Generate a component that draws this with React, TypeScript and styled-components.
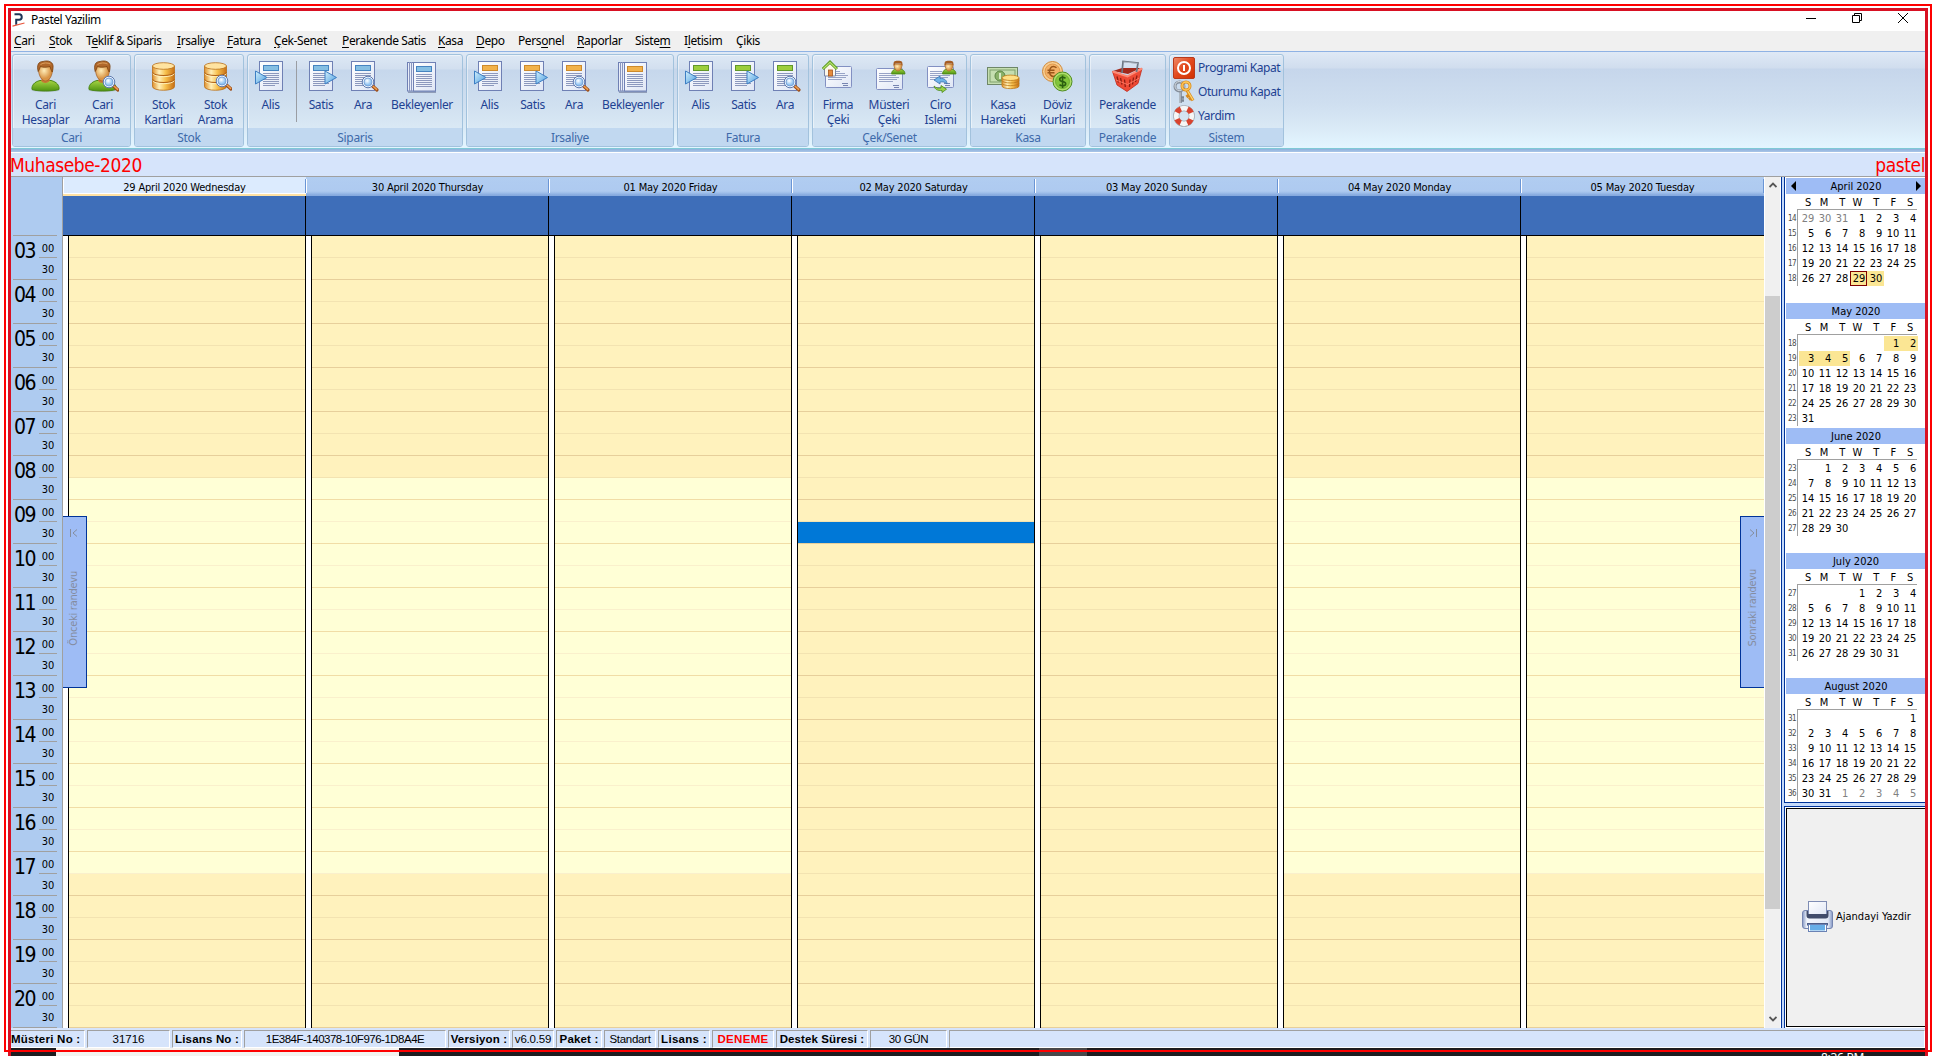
import React from "react";
import styled, { createGlobalStyle, css } from "styled-components";

const tahoma = `"DejaVu Sans Condensed", "DejaVu Sans", sans-serif`;
const segoe = `"Noto Sans", "Open Sans", sans-serif`;

const Global = createGlobalStyle`
  *, *::before, *::after { box-sizing: border-box; }
  body { margin: 0; background: #fff; overflow: hidden; }
`;

/* ---------- frame ---------- */
const Screen = styled.div`
  position: relative;
  width: 1936px;
  height: 1056px;
  padding: 8px 8px 0;
  background: #fff;
  overflow: hidden;
  font-family: ${tahoma};
  font-size: 11px;
  color: #000;
  white-space: nowrap;
`;
const OuterFrame = styled.div`
  position: absolute;
  inset: 4px 4px 4px 4px;
  border: 2px solid #fe0000;
  z-index: 10;
  pointer-events: none;
`;
const Window = styled.div`
  width: 1920px;
  height: 1048px;
  border: 3px solid #d81123;
  border-bottom: 0;
  display: flex;
  flex-direction: column;
`;

/* ---------- title & menu ---------- */
const TitleBar = styled.div`
  height: 20px;
  flex: none;
  display: flex;
  align-items: center;
  padding: 0 17px 3px 1px;
  font: 12px/17px ${segoe};
`;
const TitleText = styled.span`
  margin-left: 5px;
  flex: 1;
  letter-spacing: -0.45px;
`;
const WinButtons = styled.div`
  display: flex;
  gap: 36px;
  padding-bottom: 3px;
  line-height: 0;
`;
const MenuBar = styled.div`
  height: 21px;
  flex: none;
  display: flex;
  gap: 14px;
  padding-left: 3px;
  background: #f0f0f0;
  border-bottom: 1px solid #8fb2e4;
  font: 12px/20px ${segoe};
`;
const MenuItem = styled.span<{ $w: number }>`
  width: ${(p) => p.$w}px;
  letter-spacing: -0.4px;
  u { text-underline-offset: 2px; }
`;

/* ---------- ribbon ---------- */
const Ribbon = styled.div`
  height: 101px;
  flex: none;
  display: flex;
  align-items: flex-start;
  gap: 3px;
  padding: 2px 1px 0;
  background: linear-gradient(#dfe9f6 0, #d0ddee 16px, #c6d6eb 17px, #cfdff0 52px, #d8e8f5 72px, #e3f5ff 95px, #e3f5ff 96px, #7fc9d6 96px, #7fc9d6 97px, #8fb2dc 97px, #a9c5e8 100px, #fff 100px);
`;
const Group = styled.div<{ $w: number }>`
  width: ${(p) => p.$w}px;
  height: 93px;
  display: flex;
  flex-direction: column;
  border: 1px solid #a2c2dd;
  border-radius: 3px;
  background: linear-gradient(#dde8f5 0, #d2dfef 14px, #c6d7ec 15px, #d0e0f0 50px, #dae9f5 74px);
  overflow: hidden;
  box-shadow: inset 1px 1px 0 rgba(255, 255, 255, 0.45);
`;
const GroupBody = styled.div<{ $column?: boolean }>`
  flex: 1;
  display: flex;
  ${(p) => p.$column && css`flex-direction: column; padding: 1px 0 0 3px;`}
`;
const GroupCaption = styled.div`
  height: 18px;
  flex: none;
  background: #c1d8f0;
  color: #3e6aaa;
  text-align: center;
  font: 12px/19px ${segoe};
  letter-spacing: -0.3px;
`;
const BigButton = styled.div<{ $w: number }>`
  width: ${(p) => p.$w}px;
  flex: none;
  display: flex;
  flex-direction: column;
  align-items: center;
  padding-top: 5px;
  color: #1e4292;
  font: 12px/15px ${segoe};
  letter-spacing: -0.35px;
  text-align: center;
  white-space: pre;
  svg { margin-bottom: 4px; }
`;
const Separator = styled.div`
  width: 1px;
  height: 61px;
  margin: 6px 3px 0;
  background: #9a9da3;
`;
const SmallButton = styled.div`
  height: 24px;
  display: flex;
  align-items: center;
  gap: 3px;
  color: #1e4292;
  font: 12px/22px ${segoe};
  letter-spacing: -0.42px;
`;

/* ---------- user band ---------- */
const Band = styled.div`
  height: 24px;
  flex: none;
  display: flex;
  justify-content: space-between;
  background: #d6e4fb;
  border-bottom: 1px solid #a0a0a0;
  color: #fe0000;
  font: 19px/24px ${tahoma};
`;
const BandText = styled.span<{ $shift?: number }>`
  letter-spacing: -0.42px;
  margin-left: ${(p) => p.$shift ?? 0}px;
`;

/* ---------- main area ---------- */
const Main = styled.div`
  height: 851px;
  flex: none;
  display: flex;
`;
const TimeColumn = styled.div`
  width: 52px;
  background: #aecbf0;
  border-right: 1px solid #a0a0a0;
  padding-top: 58px;
`;
const Hour = styled.div`
  height: 44px;
  margin: 0 5px 0 2px;
  display: flex;
  border-bottom: 1px solid #a0a0a0;
  &:first-child { border-top: 1px solid #a0a0a0; height: 45px; }
`;
const HourLabel = styled.div`
  width: 26px;
  padding: 2px 0 0 1px;
  font: 21px/27px ${tahoma};
  letter-spacing: -1.4px;
`;
const Minutes = styled.div`
  width: 18px;
  font: 11px/25px ${tahoma};
  text-align: right;
  padding-right: 3px;
  letter-spacing: -0.2px;
  &:first-child { border-bottom: 1px solid #a0a0a0; }
`;
const MinuteStack = styled.div`
  width: 18px;
  ${Minutes} { height: 22px; }
  ${Minutes}:last-child { line-height: 24px; }
`;
const Schedule = styled.div`
  position: relative;
  width: 1702px;
  display: flex;
`;
const DayColumn = styled.div`
  width: 243px;
  flex: none;
`;
const DayHeader = styled.div<{ $active?: boolean }>`
  height: 19px;
  text-align: center;
  line-height: 21px;
  letter-spacing: -0.2px;
  background: linear-gradient(90deg, #fff 1px, transparent 1px) 0 2px / 1px 14px no-repeat,
    linear-gradient(90deg, #6a95d5 1px, transparent 1px) 242px 2px / 1px 14px no-repeat,
    ${(p) => p.$active
      ? "linear-gradient(#dcebfe 16px, #fff 16px, #fff 17px, #ffe2a4 17px)"
      : "linear-gradient(#b1cdf1 0, #aecaf0 14px, #9dbde9 16px, #86aadf 18px)"};
`;
const AllDay = styled.div<{ $last?: boolean }>`
  height: 40px;
  background: #3e6eb9;
  border-right: ${(p) => (p.$last ? "0" : "1px solid #000")};
  border-bottom: 1px solid #000;
`;
const Slots = styled.div<{ $last?: boolean }>`
  border-left: 5px solid #fff;
  border-right: ${(p) => (p.$last ? "0" : "1px solid #000")};
  box-shadow: inset 1px 0 0 #000;
  padding-left: 1px;
`;
const Slot = styled.div<{ $work: boolean; $hourEnd: boolean; $selected?: boolean }>`
  height: 22px;
  background: ${(p) => (p.$selected ? "#0078d7" : p.$work ? "#ffffd6" : "#fff2bd")};
  border-bottom: 1px solid
    ${(p) => (p.$work ? (p.$hourEnd ? "#f1dda6" : "#faf0cc") : p.$hourEnd ? "#e7cf9b" : "#f3e3b1")};
`;
const SideTab = styled.div<{ $right?: boolean }>`
  position: absolute;
  top: 339px;
  left: ${(p) => (p.$right ? "1677px" : "0")};
  width: 24px;
  height: 172px;
  border: 1px solid #003399;
  ${(p) => (p.$right ? "border-right: 0;" : "border-left: 0;")}
  background: #9ebcf5;
  display: flex;
  flex-direction: column;
  align-items: center;
  padding-top: 12px;
  padding-right: ${(p) => (p.$right ? 0 : 1)}px;
  color: #858da0;
`;
const SideText = styled.div<{ $top: number }>`
  margin-top: ${(p) => p.$top}px;
  writing-mode: vertical-rl;
  transform: rotate(180deg);
  font: 11px/16px ${tahoma};
  letter-spacing: -0.25px;
`;
const ScrollBar = styled.div`
  width: 16px;
  display: flex;
  flex-direction: column;
  align-items: center;
  background: #f0f0f0;
  border-right: 1px solid #fff;
`;
const ScrollArrow = styled.div`
  height: 17px;
  padding-top: 5px;
  line-height: 0;
`;
const ScrollTrack = styled.div`
  flex: 1;
  width: 100%;
  padding-top: 102px;
`;
const ScrollThumb = styled.div`
  height: 613px;
  background: #cdcdcd;
`;

/* ---------- right panel ---------- */
const Splitter = styled.div`
  width: 3px;
  background: #c5dafa;
  border-left: 1px solid #003399;
`;
const SidePanel = styled.div`
  width: 141px;
  display: flex;
  flex-direction: column;
  background: #c5dafa;
  gap: 3px;
`;
const MonthsBox = styled.div`
  height: 626px;
  border-left: 1px solid #003399;
  border-bottom: 1px solid #003399;
  background: #fff;
  padding: 1px 0 0 1px;
`;
const MonthBlock = styled.div`
  height: 125px;
`;
const MonthTitle = styled.div`
  height: 16px;
  display: flex;
  justify-content: space-between;
  align-items: center;
  padding: 0 4px 0 5px;
  background: #9ebcf5;
  line-height: 17px;
`;
const MonthName = styled.span`
  padding-top: 1px;
`;
const Arrow = styled.i<{ $dir: "left" | "right"; $hidden?: boolean }>`
  width: 0;
  border: 5px solid transparent;
  border-${(p) => (p.$dir === "left" ? "left" : "right")}-width: 0;
  border-${(p) => (p.$dir === "left" ? "right" : "left")}-color: #000;
  visibility: ${(p) => (p.$hidden ? "hidden" : "visible")};
`;
const WeekRow = styled.div`
  display: grid;
  grid-template-columns: 11px 1px repeat(7, 17px);
  height: 15px;
`;
const HeadLine = styled.div`
  height: 2px;
  margin: 0 8px 0 11px;
  border-top: 1px solid #a0a0a0;
  border-left: 1px solid #a0a0a0;
`;
const WeekNo = styled.span`
  font: 8px/15px ${tahoma};
  letter-spacing: -0.6px;
  color: #4a4a4a;
  text-align: right;
  padding-right: 1px;
`;
const VLine = styled.span`
  background: #a0a0a0;
`;
const Day = styled.span<{ $muted?: boolean; $busy?: boolean; $today?: boolean }>`
  height: 15px;
  text-align: right;
  padding-right: 2px;
  line-height: 16px;
  margin: 0 -1px 0 1px;
  letter-spacing: -0.2px;
  color: ${(p) => (p.$muted ? "#808080" : "#000")};
  ${(p) => p.$busy && css`background: #fbe694;`}
  ${(p) => p.$today && css`box-shadow: inset 0 0 0 1px #800000;`}
`;
const WeekDay = styled(Day)`
  padding-right: 5px;
  line-height: 18px;
`;
const PrintBox = styled.div`
  flex: 1;
  border-left: 1px solid #003399;
  border-top: 1px solid #003399;
  background: #fff;
  padding: 1px 0 1px 1px;
`;
const PrintButton = styled.div`
  height: 100%;
  border: 1px solid #000;
  border-right: 0;
  background: #f0f0f0;
  display: flex;
  align-items: center;
  padding: 0 0 2px 15px;
  gap: 3px;
`;

/* ---------- status bar ---------- */
const StatusBar = styled.div`
  height: 20px;
  flex: none;
  display: flex;
  gap: 2px;
  padding-top: 2px;
  background: #d6e4fb;
`;
const StatusCell = styled.div<{ $w?: number; $bold?: boolean; $red?: boolean; $ls?: number; $left?: boolean }>`
  ${(p) => (p.$w ? `width: ${p.$w}px;` : "flex: 1;")}
  border: 1px solid #fff;
  border-top-color: #a0a0a0;
  border-left: ${(p) => (p.$left ? "0" : "1px solid #a0a0a0")};
  text-align: ${(p) => (p.$left ? "left" : "center")};
  font: ${(p) => (p.$bold ? "bold 11.5px" : "11.5px")}/16px "Liberation Sans", Arial, sans-serif;
  letter-spacing: ${(p) => p.$ls ?? (p.$bold ? 0.17 : 0)}px;
  color: ${(p) => (p.$red ? "#fe0000" : "#000")};
  overflow: hidden;
`;
const TaskBar = styled.div`
  height: 8px;
  flex: none;
  display: flex;
  background: #1d1d20;
  overflow: hidden;
`;
const TaskSearch = styled.div`
  width: 343px;
  margin-left: 45px;
  background: #f3f2ee;
`;
const TaskActive = styled.div`
  width: 48px;
  margin-left: 640px;
  background: #48484a;
`;
const Clock = styled.div`
  margin-left: 734px;
  padding-top: 3px;
  font: 12px/14px ${segoe};
  color: #fff;
  letter-spacing: -0.3px;
`;

/* ---------- icons ---------- */
const DefsSvg = styled.svg`
  position: absolute;
`;
const Defs = () => (
  <DefsSvg width="0" height="0">
    <defs>
      <linearGradient id="page" x1="0" y1="0" x2="1" y2="1"><stop offset="0" stopColor="#fff" /><stop offset="1" stopColor="#dfe6f5" /></linearGradient>
      <linearGradient id="tri" x1="0" y1="0" x2="1" y2="1"><stop offset="0" stopColor="#d4f0fc" /><stop offset="1" stopColor="#4a9de0" /></linearGradient>
      <linearGradient id="gold" x1="0" x2="1"><stop offset="0" stopColor="#e0902c" /><stop offset=".3" stopColor="#fff0b8" /><stop offset=".6" stopColor="#f7c04c" /><stop offset="1" stopColor="#c86f14" /></linearGradient>
      <linearGradient id="green" x1="0" y1="0" x2="0" y2="1"><stop offset="0" stopColor="#a5d443" /><stop offset="1" stopColor="#4f9412" /></linearGradient>
      <radialGradient id="skin" cx=".4" cy=".35"><stop offset="0" stopColor="#ffedb8" /><stop offset="1" stopColor="#d99445" /></radialGradient>
      <radialGradient id="lens" cx=".4" cy=".35"><stop offset="0" stopColor="#fff" /><stop offset="1" stopColor="#8fc3f2" /></radialGradient>
      <linearGradient id="red" x1="0" y1="0" x2="1" y2="1"><stop offset="0" stopColor="#ef8a6a" /><stop offset=".5" stopColor="#e2481d" /><stop offset="1" stopColor="#d03000" /></linearGradient>
      <linearGradient id="steel" x1="0" y1="0" x2="1" y2="0"><stop offset="0" stopColor="#8497c4" /><stop offset=".15" stopColor="#f3f7fd" /><stop offset=".85" stopColor="#e3eaf7" /><stop offset="1" stopColor="#8497c4" /></linearGradient>
    </defs>
  </DefsSvg>
);
const Lens = ({ x = 0, y = 0 }: { x?: number; y?: number }) => (
  <g transform={`translate(${x} ${y})`}>
    <path d="M23 24.500l5 4.500" stroke="#9a4a16" strokeWidth="3.200" strokeLinecap="round" />
    <path d="M23.600 24.800l4 3.600" stroke="#f0a050" strokeWidth="1.500" strokeLinecap="round" />
    <circle cx="19" cy="21" r="5.800" fill="#e9f2fc" stroke="#5d79ae" />
    <circle cx="19" cy="21" r="4" fill="url(#lens)" stroke="#6f98d0" strokeWidth=".8" />
  </g>
);
const Person = () => (
  <g>
    <ellipse cx="16.500" cy="30.500" rx="14" ry="1.500" fill="#8b97ad" opacity=".35" />
    <path d="M3 29.500c-.5-4 2-7.500 8-9h11c6 1.500 8.500 5 8 9-6 2-21 2-27 0z" fill="url(#green)" stroke="#4b8717" />
    <path d="M12 20.500c1 3 7 3.500 9-.2l-2-4h-5z" fill="#c67a33" />
    <path d="M9.500 9c0 7 3.500 12 7 12s7-5 7-12c-2-3-4-4-7-4s-5.500 1-7 4z" fill="url(#skin)" stroke="#a8652a" strokeWidth=".8" />
    <path d="M9.200 11.500C7.500 5 9.500 1.500 14 1.500c5-1.500 11 0 10 6.500-.1 1.700-.4 3-.8 4-.9-1.500-1.500-3-2.200-5.500-3 1-7.500 1-9.500 0-.8 1.500-1 3-2.300 5z" fill="#b0672a" stroke="#7c420f" strokeWidth=".8" />
    <path d="M11.500 4.500c3-2 7-2 10-.5" stroke="#dda15f" fill="none" />
  </g>
);
const Barrel = () => (
  <g stroke="#b9701b" strokeWidth=".8">
    <path d="M5.500 6v20.500c0 5 22 5 22 0V6z" fill="url(#gold)" />
    <path d="M5.500 12.500c2 4 20 4 22 0M5.500 19.500c2 4 20 4 22 0" fill="none" stroke="#b06014" strokeWidth="1.200" />
    <path d="M5.800 13.700c2 4 19.500 4 21.500 0M5.800 20.700c2 4 19.500 4 21.500 0" fill="none" stroke="#fff3c0" strokeWidth=".9" />
    <ellipse cx="16.500" cy="6" rx="11" ry="3.300" fill="#ffe3a0" />
  </g>
);
const tones: Record<string, [string, string]> = {
  blue: ["#86bfe3", "#4684c0"],
  orange: ["#f2b24a", "#cd8a2c"],
  green: ["#9dce3c", "#62982a"],
};
const Sheet = ({ tone, x = 5 }: { tone: string; x?: number }) => (
  <g transform={`translate(${x} 0)`}>
    <rect x=".5" y="1.500" width="23" height="29" fill="url(#page)" stroke="#6f80b4" />
    <rect x="4.500" y="5.500" width="15" height="5" fill={tones[tone][0]} stroke={tones[tone][1]} />
    <path d="M4 13.500h16M4 15.500h16M4 17.500h16M4 19.500h16M4 21.500h16M4 23.500h16M4 25.500h12" stroke="#8c98bd" />
  </g>
);
const Check = ({ y = 7 }: { y?: number }) => (
  <g transform={`translate(0 ${y})`}>
    <rect x="3.500" y=".5" width="26" height="21" rx="1" fill="url(#page)" stroke="#8290c2" />
    <path d="M6 5.500h12M6 7.500h17M6 9.500h20M6 11.500h18M6 13.500h14" stroke="#98a3c6" />
    <path d="M20 17.500h6M21 19.500h5" stroke="#7684b0" />
  </g>
);
const MiniPerson = () => (
  <g transform="translate(18 0)">
    <path d="M.5 14c0-3 2-4.500 4.500-5h4c3 .5 5 2 5 5z" fill="url(#green)" stroke="#4b8717" strokeWidth=".8" />
    <path d="M3 4c0 4 1.500 7 4 7s4-3 4-7z" fill="url(#skin)" stroke="#a8652a" strokeWidth=".7" />
    <path d="M2.800 6C2 2 3 .8 7 .8S12 2 11.300 6L10 3.500H4.500z" fill="#a55c22" />
  </g>
);
const bigIcons: Record<string, React.ReactNode> = {
  person: <Person />,
  personFind: <><Person /><Lens x={4} y={1} /></>,
  stock: <Barrel />,
  stockFind: <><Barrel /><Lens x={4} /></>,
  euro: (
    <>
      <circle cx="11.500" cy="11.500" r="10" fill="#f8cf94" stroke="#d18836" />
      <circle cx="11.500" cy="11.500" r="7.500" fill="#f3b066" stroke="#e09a4c" />
      <path d="M15.500 7.800c-3.500-3-7-.5-7 3.700s3.500 6.500 7 3.700M6.500 10.300h7M6.500 12.800h7" fill="none" stroke="#9a5518" strokeWidth="1.500" />
      <circle cx="21.500" cy="21.500" r="9.500" fill="#aedd6c" stroke="#4f8d20" />
      <circle cx="21.500" cy="21.500" r="7" fill="#82c53c" stroke="#66a82b" strokeWidth=".8" />
      <path d="M24.500 18.300c-2-1.800-5.800-1.200-5.800 1.200 0 2.800 6 1.500 6 4.200 0 2.300-4.200 2.800-6.200 1M21.600 15.500v12.500" fill="none" stroke="#2c5f10" strokeWidth="1.600" />
    </>
  ),
  cash: (
    <>
      <rect x=".5" y="7.500" width="30" height="17" fill="#c5deb0" stroke="#6e8768" />
      <rect x="3" y="10" width="25" height="12" fill="none" stroke="#7fa06d" />
      <circle cx="13" cy="16" r="5" fill="#89b169" stroke="#5c8545" />
      <path d="M13 13v6" stroke="#d8eac6" strokeWidth="2" />
      <g fill="url(#gold)" stroke="#bd7c1c" strokeWidth=".8">
        <path d="M15 18v8c0 3.500 17 3.500 17 0v-8z" />
        <path d="M15 20.700c1 3 16 3 17 0M15 23.400c1 3 16 3 17 0" fill="none" />
        <ellipse cx="23.500" cy="17.800" rx="8.500" ry="2.700" fill="#ffdf83" />
      </g>
    </>
  ),
  basket: (
    <>
      <path d="M2 11l9-3h19l-13 6z" fill="#a3291b" />
      <path d="M1.500 11.500l15 5L31 8.500l-4 15L16 31.500 6 25z" fill="#ee4a35" stroke="#c22a1a" strokeWidth=".8" />
      <path d="M6 16.500l1.500 6M9.500 18l1.500 6.500M13.500 19.500l.8 7.500M19 19.500l-.5 7.500M22.500 17.500l-1 7M26 15.500l-1.500 6.500" stroke="#8f1d12" strokeWidth="1.300" />
      <path d="M5 20l11.500 4.500L28.500 18" stroke="#ff7d68" strokeWidth=".9" />
      <path d="M1.500 11.500l15 5L31 8.500" stroke="#ff8a75" strokeWidth="2" />
      <path d="M11 13l1-11.500 15 1.500-1.500 9" stroke="#6d7683" strokeWidth="1.700" />
      <path d="M12.500 2l14 1.400" stroke="#c7ced8" strokeWidth=".7" />
    </>
  ),
  company: (
    <>
      <Check y={6} />
      <g transform="translate(0 1)">
        <path d="M2.500 7v8h11V7L8 1.500z" fill="#fdf7ea" stroke="#7b86a6" />
        <rect x="6.500" y="9" width="4" height="6" fill="#e58a3c" stroke="#a4531a" strokeWidth=".8" />
        <path d="M.8 8L8 1.200 15 8" fill="none" stroke="#5c9a23" strokeWidth="3" />
        <path d="M1.200 7.700L8 1.400l6.600 6.300" fill="none" stroke="#b8e36c" strokeWidth="1.200" />
      </g>
    </>
  ),
  customer: <><Check y={8} /><MiniPerson /></>,
  endorse: (
    <>
      <Check y={6} />
      <MiniPerson />
      <path d="M10 20l6-4v2.500c4.500-.5 7 2 7 5.500-2-2-4-2.500-7-2V24z" fill="#6fb3e8" stroke="#356fae" strokeWidth=".8" />
      <path d="M10 26c2 2 4.500 2.500 7 2v-2.500l5.500 3.700-4.500 3.300V30.500c-4.500.3-7-1-8-4.500z" fill="#9bd14a" stroke="#4b8b1c" strokeWidth=".8" />
    </>
  ),
};
const makeSheetIcon = (kind: string, tone: string) => {
  if (kind === "in")
    return <><Sheet tone={tone} x={5} /><path d="M1.500 11L13 17.500 1.500 24z" fill="url(#tri)" stroke="#3d7fc4" /></>;
  if (kind === "out")
    return <><Sheet tone={tone} x={4} /><path d="M20 11L31.500 17.500 20 24z" fill="url(#tri)" stroke="#3d7fc4" /></>;
  if (kind === "find") return <><Sheet tone={tone} x={4} /><Lens x={2} y={1} /></>;
  return (
    <>
      <path d="M2 32.200h28" stroke="#75809f" strokeWidth="1.600" opacity=".7" />
      <rect x="1.500" y="2.500" width="28" height="28.500" fill="#e9eef9" stroke="#6f80b4" />
      <path d="M3.500 2v29M5.500 2v29" stroke="#8996bf" />
      <rect x="7.500" y="2.500" width="22" height="28.500" fill="url(#page)" stroke="#6f80b4" />
      <rect x="10.500" y="6.500" width="15" height="5" fill={tones[tone][0]} stroke={tones[tone][1]} />
      <path d="M10 14.500h16M10 16.500h16M10 18.500h16M10 20.500h16M10 22.500h16M10 24.500h16M10 26.500h16" stroke="#8c98bd" />
    </>
  );
};
const BigIcon = ({ name }: { name: string }) => {
  const [kind, tone] = name.split(":");
  return (
    <svg width="33" height="33" viewBox="0 0 33 33" fill="none">
      {tone ? makeSheetIcon(kind, tone) : bigIcons[kind]}
    </svg>
  );
};
const PowerIcon = () => (
  <svg width="22" height="22" viewBox="0 0 22 22" fill="none">
    <rect x=".5" y=".5" width="21" height="21" rx="1.500" fill="url(#red)" stroke="#b83a1c" />
    <circle cx="11" cy="11" r="6" stroke="#fff" strokeWidth="2" />
    <path d="M11 8v6" stroke="#fff" strokeWidth="2" />
  </svg>
);
const KeysIcon = () => (
  <svg width="22" height="24" viewBox="0 0 22 24" fill="none">
    <path d="M7.500 10v13M8 17.500h3M8 20.500h3" stroke="#7b8592" strokeWidth="2.600" />
    <path d="M7 10v13" stroke="#d3dae2" strokeWidth="1" />
    <circle cx="6.500" cy="6.500" r="4.500" stroke="#87909c" strokeWidth="3" />
    <circle cx="6.500" cy="6" r="4.500" stroke="#d9dfe6" strokeWidth="1" />
    <path d="M13.500 9.500l6.500 11M16 15l-2.500 2M18 18l-2 1.500" stroke="#d98a1e" strokeWidth="3.200" />
    <path d="M14 10l6 10" stroke="#ffd36a" strokeWidth="1.400" />
    <circle cx="13" cy="6" r="4" stroke="#dc8f20" strokeWidth="3" />
    <circle cx="13" cy="6" r="4" stroke="#ffc95c" strokeWidth="1.300" />
  </svg>
);
const BuoyIcon = () => (
  <svg width="22" height="22" viewBox="0 0 22 22" fill="none">
    <circle cx="11" cy="11" r="7.800" stroke="#9aa0a8" strokeWidth="6" />
    <circle cx="11" cy="11" r="7.800" stroke="#f6f6f6" strokeWidth="4.800" />
    <circle cx="11" cy="11" r="7.800" stroke="#d8432f" strokeWidth="5.400" strokeDasharray="5.400 6.850" strokeDashoffset="-3.400" />
  </svg>
);
const PrinterIcon = () => (
  <svg width="31" height="31" viewBox="0 0 31 31" fill="none">
    <rect x=".5" y="9.500" width="30" height="18" rx="2.500" fill="url(#steel)" stroke="#7585b0" />
    <rect x="6.500" y=".5" width="18" height="14" fill="url(#page)" stroke="#7f8db4" />
    <path d="M4.500 10v4.500c0 2 1 3 3 3h16c2 0 3-1 3-3V10H25v3H6v-3z" fill="#414c6b" />
    <rect x="5" y="22" width="21" height="2.500" fill="#4d5d88" />
    <rect x="6.500" y="23.500" width="18" height="7" fill="#fff" stroke="#6a82b4" />
    <rect x="8" y="24" width="15" height="5.500" fill="#66aee8" />
  </svg>
);
const Logo = () => (
  <svg width="14" height="14" viewBox="0 0 14 14" fill="none">
    <path d="M2.500 1.200h4.700c3.400 0 3.400 5.600 0 5.600H4.200v5" stroke="#1d3557" strokeWidth="2" />
    <path d="M.5 13.200L12.500 10" stroke="#e8573e" strokeWidth="1.200" />
  </svg>
);

/* ---------- data ---------- */
type Btn = [string, string, number];
const groups: { title: string; w: number; items: (Btn | null)[] }[] = [
  { title: "Cari", w: 119, items: [["person", "Cari\nHesaplar", 65], ["personFind", "Cari\nArama", 49]] },
  { title: "Stok", w: 110, items: [["stock", "Stok\nKartlari", 57], ["stockFind", "Stok\nArama", 47]] },
  { title: "Siparis", w: 216, items: [["in:blue", "Alis", 45], null, ["out:blue", "Satis", 42], ["find:blue", "Ara", 42], ["book:blue", "Bekleyenler", 76]] },
  { title: "Irsaliye", w: 208, items: [["in:orange", "Alis", 45], ["out:orange", "Satis", 41], ["find:orange", "Ara", 42], ["book:orange", "Bekleyenler", 76]] },
  { title: "Fatura", w: 132, items: [["in:green", "Alis", 45], ["out:green", "Satis", 41], ["find:green", "Ara", 42]] },
  { title: "Çek/Senet", w: 155, items: [["company", "Firma\nÇeki", 50], ["customer", "Müsteri\nÇeki", 52], ["endorse", "Ciro\nIslemi", 51]] },
  { title: "Kasa", w: 116, items: [["cash", "Kasa\nHareketi", 64], ["euro", "Döviz\nKurlari", 45]] },
  { title: "Perakende", w: 77, items: [["basket", "Perakende\nSatis", 75]] },
];
const menu: [string, string, string, number][] = [
  ["", "C", "ari", 21], ["", "S", "tok", 23], ["T", "e", "klif & Siparis", 77], ["", "I", "rsaliye", 36],
  ["", "F", "atura", 33], ["", "Ç", "ek-Senet", 54], ["", "P", "erakende Satis", 82], ["", "K", "asa", 24],
  ["", "D", "epo", 28], ["Pers", "o", "nel", 45], ["", "R", "aporlar", 44], ["Siste", "m", "", 35],
  ["I", "l", "etisim", 38], ["Çikis", "", "", 25],
];
const days = ["29 April 2020 Wednesday", "30 April 2020 Thursday", "01 May 2020 Friday", "02 May 2020 Saturday", "03 May 2020 Sunday", "04 May 2020 Monday", "05 May 2020 Tuesday"];
const hours = Array.from({ length: 18 }, (_, i) => String(i + 3).padStart(2, "0"));
const slots = Array.from({ length: 36 }, (_, i) => i);

type Month = { name: string; week: number; lead: number; count: number; before?: number; after?: number; busy: number[]; today?: number };
const months: Month[] = [
  { name: "April 2020", week: 14, lead: 3, count: 30, before: 29, busy: [29, 30], today: 29 },
  { name: "May 2020", week: 18, lead: 5, count: 31, busy: [1, 2, 3, 4, 5] },
  { name: "June 2020", week: 23, lead: 1, count: 30, busy: [] },
  { name: "July 2020", week: 27, lead: 3, count: 31, busy: [] },
  { name: "August 2020", week: 31, lead: 6, count: 31, after: 5, busy: [] },
];
const status: { t: string; w?: number; bold?: boolean; red?: boolean; ls?: number; left?: boolean }[] = [
  { t: "Müsteri No :", w: 74, bold: true, left: true, ls: 0.25 }, { t: "31716", w: 83 },
  { t: "Lisans No :", w: 70, bold: true }, { t: "1E384F-140378-10F976-1D8A4E", w: 202, ls: -0.5 },
  { t: "Versiyon :", w: 62, bold: true }, { t: "v6.0.59", w: 42, ls: -0.2 },
  { t: "Paket :", w: 46, bold: true }, { t: "Standart", w: 52, ls: -0.3 },
  { t: "Lisans :", w: 52, bold: true, ls: 0.3 }, { t: "DENEME", w: 62, bold: true, red: true, ls: 0.3 },
  { t: "Destek Süresi :", w: 92, bold: true, ls: 0.1 }, { t: "30 GÜN", w: 77, ls: -0.3 }, { t: "" },
];

const MonthView = ({ m, first }: { m: Month; first: boolean }) => {
  const weeks = Math.ceil((m.lead + m.count) / 7);
  return (
    <MonthBlock>
      <MonthTitle>
        <Arrow $dir="left" $hidden={!first} />
        <MonthName>{m.name}</MonthName>
        <Arrow $dir="right" $hidden={!first} />
      </MonthTitle>
      <WeekRow>
        <span /><span />
        {"SMTWTFS".split("").map((d, i) => <WeekDay key={i}>{d}</WeekDay>)}
      </WeekRow>
      <HeadLine />
      {Array.from({ length: weeks }, (_, w) => (
        <WeekRow key={w}>
          <WeekNo>{m.week + w}</WeekNo>
          <VLine />
          {Array.from({ length: 7 }, (_, d) => {
            const n = w * 7 + d - m.lead + 1;
            if (n < 1) return <Day key={d} $muted>{m.before ? m.before + w * 7 + d : ""}</Day>;
            if (n > m.count) return <Day key={d} $muted>{m.after ? n - m.count : ""}</Day>;
            return <Day key={d} $busy={m.busy.includes(n)} $today={m.today === n}>{n}</Day>;
          })}
        </WeekRow>
      ))}
    </MonthBlock>
  );
};

export default function App() {
  return (
    <Screen>
      <Global />
      <Defs />
      <OuterFrame />
      <Window>
        <TitleBar>
          <Logo />
          <TitleText>Pastel Yazilim</TitleText>
          <WinButtons>
            <svg width="10" height="10" viewBox="0 0 10 10"><path d="M0 5.500h10" stroke="#000" /></svg>
            <svg width="10" height="10" viewBox="0 0 10 10" fill="none" stroke="#000"><path d="M.5 2.500h7v7h-7zM2.500 2.500v-2h7v7h-2" /></svg>
            <svg width="10" height="10" viewBox="0 0 10 10" stroke="#000"><path d="M0 0l10 10M10 0L0 10" /></svg>
          </WinButtons>
        </TitleBar>
        <MenuBar>
          {menu.map(([a, b, c, w]) => (
            <MenuItem key={a + b + c} $w={w}>{a}{b && <u>{b}</u>}{c}</MenuItem>
          ))}
        </MenuBar>
        <Ribbon>
          {groups.map((g) => (
            <Group key={g.title} $w={g.w}>
              <GroupBody>
                {g.items.map((it, i) => it
                  ? <BigButton key={i} $w={it[2]}><BigIcon name={it[0]} />{it[1]}</BigButton>
                  : <Separator key={i} />)}
              </GroupBody>
              <GroupCaption>{g.title}</GroupCaption>
            </Group>
          ))}
          <Group $w={115}>
            <GroupBody $column>
              <SmallButton><PowerIcon />Programi Kapat</SmallButton>
              <SmallButton><KeysIcon />Oturumu Kapat</SmallButton>
              <SmallButton><BuoyIcon />Yardim</SmallButton>
            </GroupBody>
            <GroupCaption>Sistem</GroupCaption>
          </Group>
        </Ribbon>
        <Band>
          <BandText $shift={-1}>Muhasebe-2020</BandText>
          <BandText>pastel</BandText>
        </Band>
        <Main>
          <TimeColumn>
            {hours.map((h) => (
              <Hour key={h}>
                <HourLabel>{h}</HourLabel>
                <MinuteStack><Minutes>00</Minutes><Minutes>30</Minutes></MinuteStack>
              </Hour>
            ))}
          </TimeColumn>
          <Schedule>
            {days.map((d, i) => (
              <DayColumn key={d}>
                <DayHeader $active={i === 0}>{d}</DayHeader>
                <AllDay $last={i === 6} />
                <Slots $last={i === 6}>
                  {slots.map((s) => (
                    <Slot
                      key={s}
                      $work={i !== 3 && i !== 4 && s >= 11 && s < 29}
                      $hourEnd={s % 2 === 1}
                      $selected={i === 3 && s === 13}
                    />
                  ))}
                </Slots>
              </DayColumn>
            ))}
            <SideTab>
              <svg width="8" height="8" viewBox="0 0 8 8" fill="none" stroke="#858d9c"><path d="M.5 0v8M7 .5L3 4l4 3.500" /></svg>
              <SideText $top={34}>Önceki randevu</SideText>
            </SideTab>
            <SideTab $right>
              <svg width="8" height="8" viewBox="0 0 8 8" fill="none" stroke="#858d9c"><path d="M7.500 0v8M1 .5L5 4 1 7.500" /></svg>
              <SideText $top={32}>Sonraki randevu</SideText>
            </SideTab>
          </Schedule>
          <ScrollBar>
            <ScrollArrow><svg width="8" height="6" viewBox="0 0 8 6" fill="none" stroke="#555" strokeWidth="1.800"><path d="M.5 5L4 1.500 7.500 5" /></svg></ScrollArrow>
            <ScrollTrack><ScrollThumb /></ScrollTrack>
            <ScrollArrow><svg width="8" height="6" viewBox="0 0 8 6" fill="none" stroke="#555" strokeWidth="1.800"><path d="M.5 1L4 4.500 7.500 1" /></svg></ScrollArrow>
          </ScrollBar>
          <Splitter />
          <SidePanel>
            <MonthsBox>
              {months.map((m, i) => <MonthView key={m.name} m={m} first={i === 0} />)}
            </MonthsBox>
            <PrintBox>
              <PrintButton><PrinterIcon />Ajandayi Yazdir</PrintButton>
            </PrintBox>
          </SidePanel>
        </Main>
        <StatusBar>
          {status.map((c, i) => (
            <StatusCell key={i} $w={c.w} $bold={c.bold} $red={c.red} $ls={c.ls} $left={c.left}>{c.t}</StatusCell>
          ))}
        </StatusBar>
        <TaskBar>
          <TaskSearch />
          <TaskActive />
          <Clock>8:36 PM</Clock>
        </TaskBar>
      </Window>
    </Screen>
  );
}
